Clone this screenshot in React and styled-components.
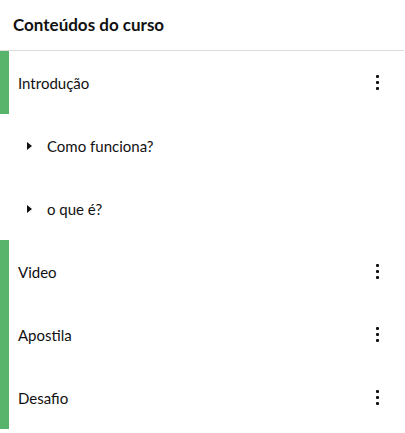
import React from "react"
import styled, { createGlobalStyle } from "styled-components"

const GlobalStyle = createGlobalStyle`
  body {
    margin: 0;
    background: #fff;
    font-family: "Lato", "Open Sans", sans-serif;
    color: #111;
  }
`

const Panel = styled.div`
  width: 404px;
`

const Header = styled.h2`
  margin: 0;
  height: 51px;
  display: flex;
  align-items: center;
  padding-left: 13px;
  padding-bottom: 2px;
  font-size: 17px;
  font-weight: 700;
  border-bottom: 1px solid #dcdcdc;
  box-sizing: border-box;
`

const Row = styled.div`
  display: flex;
  align-items: center;
  height: 63px;
  padding-left: ${props => (props.sub ? "27px" : "9px")};
  padding-right: 25px;
  border-left: ${props => (props.sub ? "none" : "9px solid #58b46b")};
  box-sizing: border-box;
  font-size: 15px;
`

const Label = styled.span`
  flex: 1;
`

const Caret = styled.span`
  width: 0;
  height: 0;
  border-top: 4px solid transparent;
  border-bottom: 4px solid transparent;
  border-left: 5px solid #111;
  margin-right: 15px;
`

const Kebab = styled.span`
  display: flex;
  flex-direction: column;
  gap: 3px;

  &::before,
  &::after,
  & > i {
    content: "";
    width: 3px;
    height: 3px;
    background: #111;
    border-radius: 1px;
  }
`

const items = [
  { label: "Introdução" },
  { label: "Como funciona?", sub: true },
  { label: "o que é?", sub: true },
  { label: "Video" },
  { label: "Apostila" },
  { label: "Desafio" },
]

export default function App() {
  return (
    <>
      <GlobalStyle />
      <Panel>
        <Header>Conteúdos do curso</Header>
        {items.map(item => (
          <Row key={item.label} sub={item.sub}>
            {item.sub && <Caret />}
            <Label>{item.label}</Label>
            {!item.sub && (
              <Kebab>
                <i />
              </Kebab>
            )}
          </Row>
        ))}
      </Panel>
    </>
  )
}
